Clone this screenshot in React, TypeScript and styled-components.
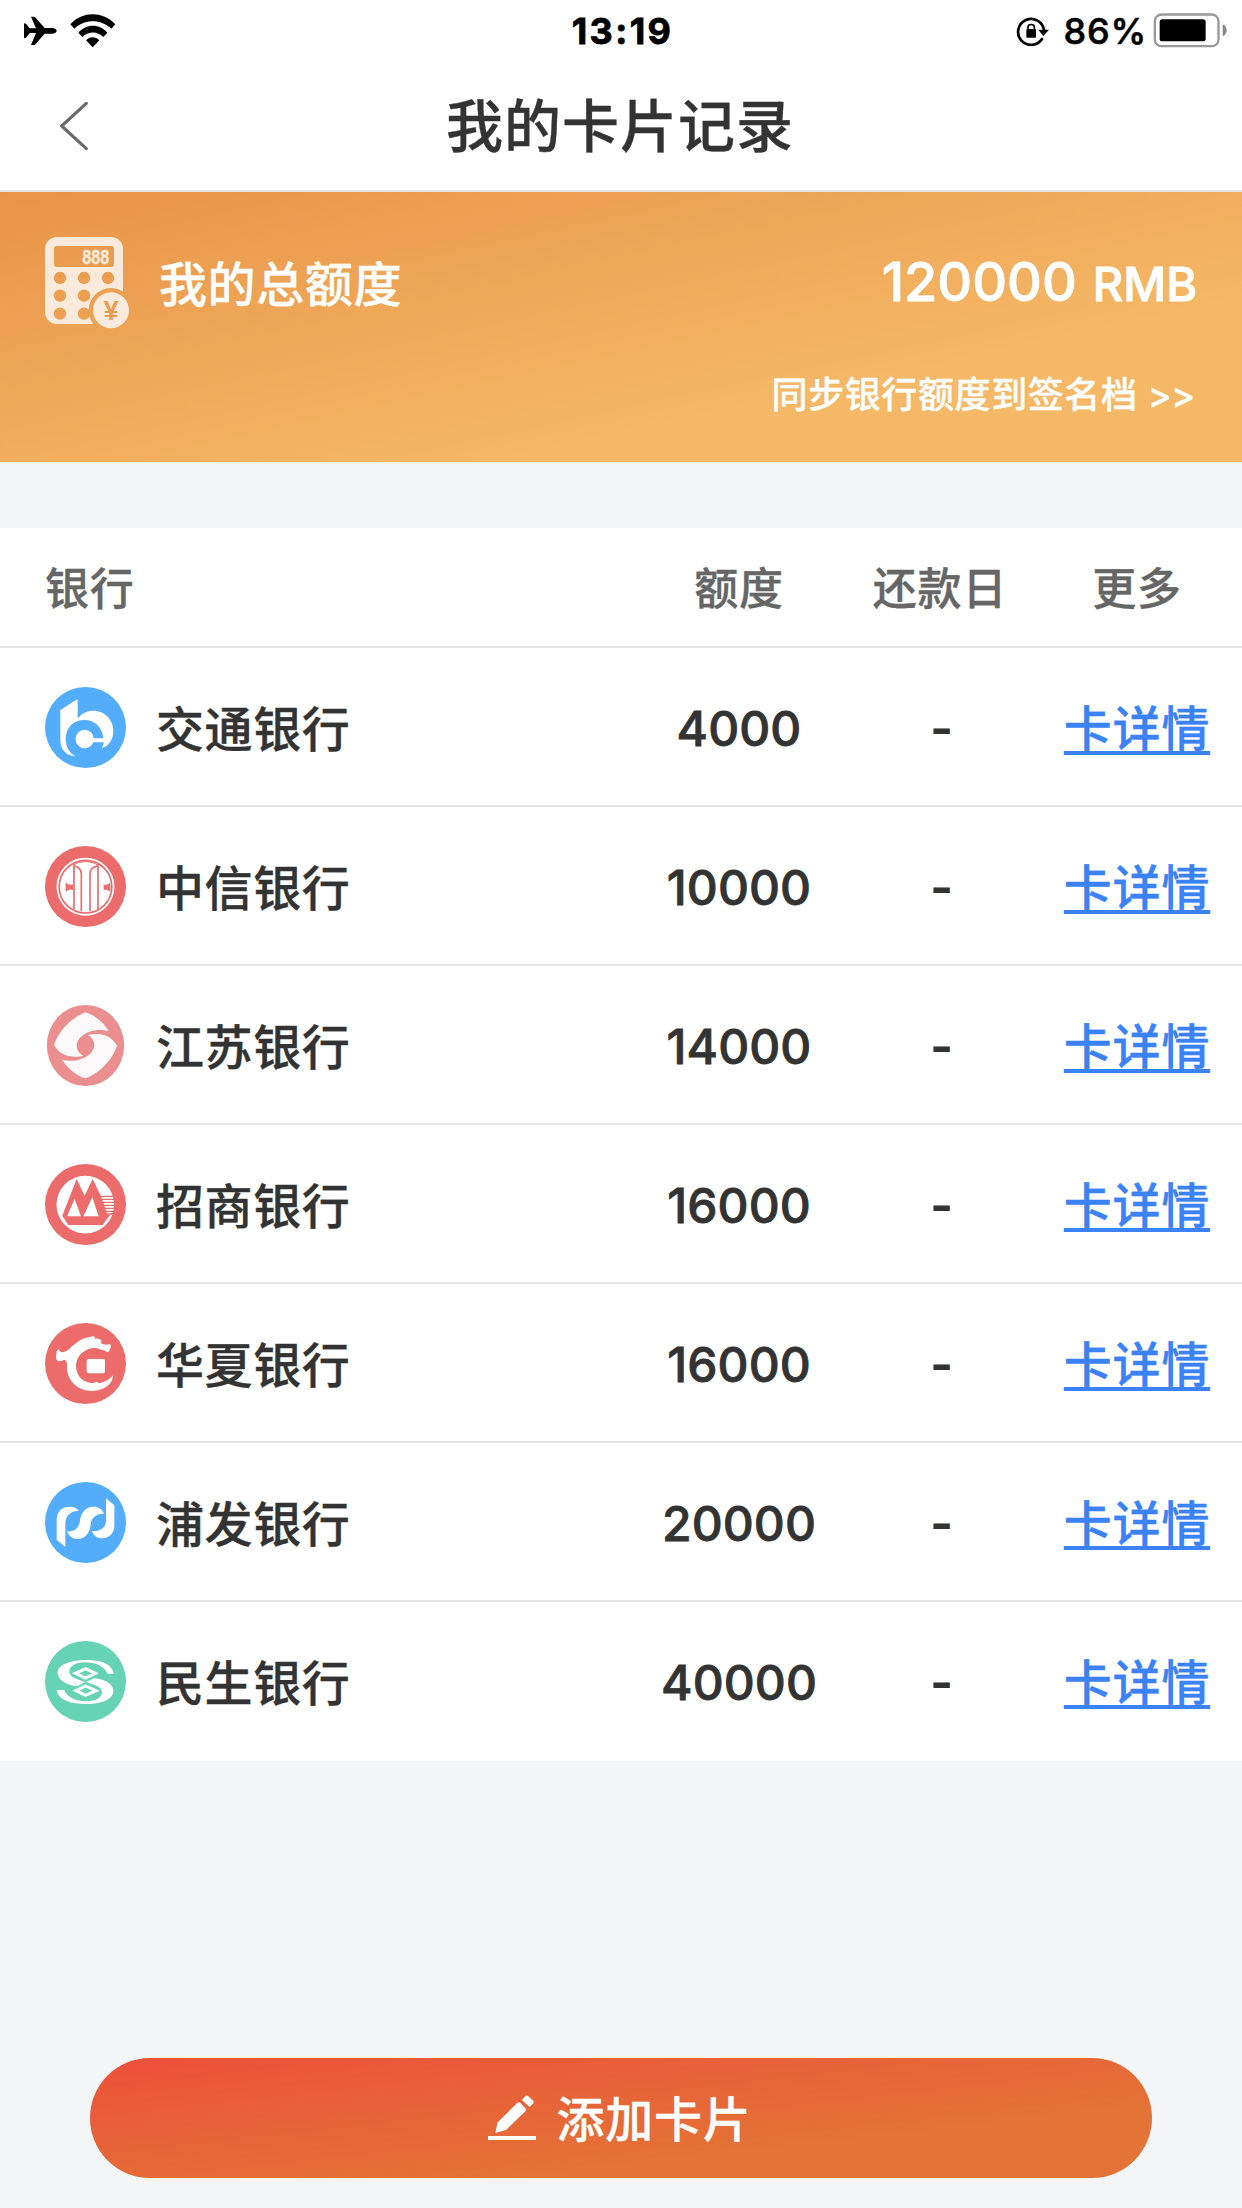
import React from "react";
import styled, { createGlobalStyle } from "styled-components";

const GlobalStyle = createGlobalStyle`
  body {
    margin: 0;
    background: #f3f5f7;
    font-family: Inter, "Noto Sans CJK SC", sans-serif;
    color: #333;
  }
`;

const Screen = styled.div`
  display: flex;
  flex-direction: column;
  width: 1242px;
  height: 2208px;
  overflow: hidden;
  background: #f3f5f7;
  -webkit-text-stroke-width: 0.35px;
`;

const StatusBar = styled.div`
  display: grid;
  grid-template-columns: 1fr auto 1fr;
  align-items: center;
  height: 60px;
  padding: 2px 15px 0 24px;
  box-sizing: border-box;
  background: #fff;
  color: #000;
`;

const StatusGroup = styled.div<{ $end?: boolean }>`
  display: flex;
  align-items: center;
  justify-content: ${(p) => (p.$end ? "flex-end" : "flex-start")};
`;

const Clock = styled.div`
  font-size: 36px;
  line-height: 40px;
  font-weight: 700;
  letter-spacing: 2.4px;
  margin-right: 6px;
  -webkit-text-stroke-width: 0.8px;
`;

const Percent = styled.span`
  font-size: 36px;
  line-height: 40px;
  font-weight: 500;
  letter-spacing: 0.8px;
  margin: 0 6px 0 15px;
  -webkit-text-stroke-width: 0.6px;
`;

const NavBar = styled.header`
  display: grid;
  grid-template-columns: 120px 1fr 120px;
  align-items: center;
  height: 132px;
  box-sizing: border-box;
  border-bottom: 2px solid #e5e5e5;
  background: #fff;
`;

const BackButton = styled.button`
  display: flex;
  padding: 2px 0 0 60px;
  border: 0;
  background: none;
`;

const Title = styled.h1`
  margin: 0;
  padding: 4px 2px 0 0;
  text-align: center;
  font-size: 57px;
  line-height: 80px;
  font-weight: 500;
  letter-spacing: 1px;
`;

const Summary = styled.section`
  display: flex;
  flex-direction: column;
  height: 270px;
  box-sizing: border-box;
  padding: 45px 45px 0;
  background: linear-gradient(to bottom right, #e99348, #f4b866 70%);
  color: #fff;
`;

const SummaryRow = styled.div`
  display: flex;
  align-items: center;
  height: 92px;
`;

const SummaryLabel = styled.div`
  flex: 1;
  margin-left: 30px;
  padding-bottom: 5px;
  font-size: 48px;
  font-weight: 500;
  letter-spacing: 0.6px;
`;

const Total = styled.div`
  display: flex;
  align-items: baseline;
  gap: 16px;
  padding-bottom: 3px;
  font-weight: 500;
  font-size: 54px;
  -webkit-text-stroke-width: 0.9px;
`;

const Currency = styled.span`
  font-size: 47px;
`;

const SyncLink = styled.a`
  align-self: flex-end;
  margin-top: 39px;
  padding-right: 2px;
  font-size: 36px;
  line-height: 54px;
  font-weight: 500;
  letter-spacing: 0.6px;
`;

const Arrows = styled.span`
  letter-spacing: -0.4px;
`;

const Table = styled.section`
  margin-top: 66px;
  background: #fff;
`;

const Row = styled.div<{ $head?: boolean }>`
  display: grid;
  grid-template-columns: 1fr 202px 200px 194px;
  align-items: center;
  justify-items: center;
  height: ${(p) => (p.$head ? 120 : 159)}px;
  box-sizing: border-box;
  padding: ${(p) => (p.$head ? "0 8px 2px 45px" : "2px 8px 0 45px")};
  border-bottom: 2px solid #e5e5e5;
  font-size: ${(p) => (p.$head ? 44 : 48)}px;
  font-weight: 500;
  letter-spacing: 0.8px;
  color: ${(p) => (p.$head ? "#666" : "#333")};

  &:last-child {
    border-bottom-color: #fff;
  }
`;

const Bank = styled.div`
  display: flex;
  align-items: center;
  justify-self: start;
  gap: 30px;
`;

const BankName = styled.span`
  padding-bottom: 4px;
  letter-spacing: 0.6px;
`;

const Amount = styled.span`
  padding-top: 1px;
  letter-spacing: 0.1px;
  -webkit-text-stroke-width: 0.8px;
`;

const DueDay = styled.span`
  padding: 1px 0 0 4px;
  -webkit-text-stroke-width: 0.8px;
`;

const Detail = styled.a`
  line-height: 56px;
  color: #3b82f7;
  padding-top: 3px;
  text-decoration: underline;
  text-decoration-thickness: 4px;
  text-decoration-skip-ink: none;
  text-underline-offset: 5px;
`;

const AddButton = styled.button`
  display: flex;
  align-items: center;
  justify-content: center;
  gap: 21px;
  width: 1062px;
  height: 120px;
  margin: auto auto 30px;
  padding: 0 3px 0 0;
  border: 0;
  border-radius: 60px;
  background: linear-gradient(to bottom right, #ed503a, #e37336 70%);
  color: #fff;
  font: 500 48px Inter, "Noto Sans CJK SC", sans-serif;
  letter-spacing: 0.7px;
`;

const AddLabel = styled.span`
  padding-bottom: 5px;
`;

const WifiIcon = styled.svg`
  margin-left: 13px;
`;

const Plane = () => (
  <svg width="33" height="30" viewBox="72 50 99 90">
    <path d="M72 72L78 73L89 87H108L93 52H104L134 86H158C174 88 174 101 158 103H134L104 137H93L108 101H89L78 115L72 117Z" />
  </svg>
);

const Wifi = () => (
  <WifiIcon width="46" height="34" viewBox="211 38 138 102">
    <path d="M212 69C248 29 310 29 347 69L335 82C305 52 253 52 224 82Z" />
    <path d="M236 94C260 66 300 66 323 94L311 107C293 89 266 89 248 107Z" />
    <path d="M259 117C270 105 288 105 299 117L279 138Z" />
  </WifiIcon>
);

const RotationLock = () => (
  <svg width="33" height="30" viewBox="106 49 99 90">
    <path d="M184 118A39 39 0 1 1 190 92" fill="none" stroke="#000" strokeWidth="8" strokeLinecap="round" />
    <path d="M173 90H205L188 109Z" />
    <rect x="137" y="88" width="29" height="26" rx="3" />
    <path d="M142 90V82C142 72 161 72 161 82V90" fill="none" stroke="#000" strokeWidth="5" />
  </svg>
);

const Battery = () => (
  <svg width="74" height="36" viewBox="517 38 222 108">
    <rect x="522.5" y="42.5" width="191" height="95" rx="20" fill="none" stroke="#999" strokeWidth="7" />
    <rect x="537" y="57" width="138" height="66" rx="8" />
    <path d="M726 72C742 78 742 102 726 108Z" fill="#888" />
  </svg>
);

const Chevron = () => (
  <svg width="28" height="48" viewBox="180 306 84 144">
    <path d="M259 310L185 378L259 446" fill="none" stroke="#6b6b6b" strokeWidth="9.5" strokeLinecap="round" strokeLinejoin="round" />
  </svg>
);

const Calculator = () => (
  <svg width="84" height="92" viewBox="135 111 252 276">
    <mask id="keys">
      <rect x="135" y="111" width="234" height="261" rx="36" fill="#fff" />
      <rect x="162" y="138" width="180" height="63" rx="9" fill="#000" />
      {[234, 287, 341].map((y) =>
        [180, 252, 324].map((x) => <circle key={`${x}-${y}`} cx={x} cy={y} r="18.5" fill="#000" />)
      )}
      <circle cx="333" cy="331" r="67" fill="#000" />
    </mask>
    <rect x="135" y="111" width="252" height="276" fill="#faeadb" mask="url(#keys)" />
    <text
      x="247"
      y="192"
      fontFamily="Liberation Sans"
      fontWeight="700"
      fontSize="60"
      fill="#faeadb"
      stroke="#faeadb"
      textLength="81"
      lengthAdjust="spacingAndGlyphs"
    >
      888
    </text>
    <circle cx="333" cy="331" r="54" fill="#faeadb" />
    <text x="333" y="359" textAnchor="middle" fontFamily="Liberation Sans" fontWeight="700" fontSize="82" fill="#eb9c50">
      ¥
    </text>
  </svg>
);

const Pencil = () => (
  <svg width="48" height="46" viewBox="488 2096 48 46" fill="#fff">
    <path d="M495.3 2134L497.5 2123.5L517 2104.2Q519 2102.5 520.6 2104L525.6 2109.4Q526.6 2110.8 525.2 2112.4L506 2131Z" />
    <path d="M525.3 2097Q526.6 2095.8 528 2097L533 2101.6Q534.2 2103 533.2 2104.4L529.6 2108L522 2101Z" />
    <rect x="488" y="2137" width="48" height="4" />
  </svg>
);

const RED = "#ec6b6b";
const BLUE = "#54adfb";

const Bocom = () => (
  <svg width="81" height="81" viewBox="135 501 243 243">
    <circle cx="256.5" cy="622.5" r="121.5" fill={BLUE} />
    <path
      fill="#fff"
      d="M181 570L233 537V595C245 580 262 572 280 572C315 572 340 600 340 632C340 660 324 679 306 684L312 667H278V655H310C307 622 285 600 253 600C220 600 197 624 197 656C197 680 208 700 228 709C200 708 181 690 181 660Z"
    />
    <circle cx="254" cy="657" r="27.5" fill="#fff" />
  </svg>
);

const Citic = () => (
  <svg width="81" height="81" viewBox="45 48 243 243">
    <circle cx="166.5" cy="169.5" r="121.5" fill={RED} />
    <circle cx="166.5" cy="170" r="87" fill="#fff" />
    <circle cx="166.5" cy="170" r="79" fill="#fff" stroke={RED} strokeWidth="5" />
    <g fill="none" stroke={RED} strokeWidth="5">
      <path d="M132 102V238M204 102V238" />
      <path d="M132 108Q154 112 154 132V244M202 108Q180 112 180 132V244" />
      <path d="M133 105Q140 96 166.5 95Q194 96 201 105" strokeWidth="3" />
    </g>
    <path fill={RED} d="M107 157Q116 168 129 163V180Q116 175 107 186ZM241 157Q232 168 221 163V180Q232 175 241 186Z" />
  </svg>
);

const BLADE =
  "M72 645C82 615 110 570 166 547C190 553 220 575 236 603C205 595 175 603 160 615C142 627 136 645 143 660C147 669 153 674 160 677C145 681 125 682 108 676C90 669 80 658 72 645Z";

const Jiangsu = () => (
  <svg width="81" height="81" viewBox="45 525 243 243">
    <ellipse cx="166.5" cy="646.5" rx="116" ry="121.5" fill="#ea8e90" />
    <g fill="#fbf8f9">
      <path d={BLADE} />
      <path d={BLADE} transform="rotate(180 166.5 646)" />
    </g>
  </svg>
);

const Merchants = () => (
  <svg width="81" height="81" viewBox="45 42 243 243">
    <circle cx="166.5" cy="163.5" r="121.5" fill={RED} />
    <circle cx="166" cy="164" r="86.5" fill="#fff" />
    <path fill={RED} d="M97 197L140 87L164 137L188 87L212 137L233 195H240L218 225H115Z" />
    <path fill="#fff" d="M134 147L153 199H111ZM187 142L206 199H160Z" />
    <path stroke={RED} strokeWidth="4" d="M210 139H252M212 148H254M215 157H254M218 166H254M221 175H254M224 184H254M227 192H250" />
  </svg>
);

const Huaxia = () => (
  <svg width="81" height="81" viewBox="45 519 243 243">
    <circle cx="166.5" cy="640.5" r="121.5" fill={RED} />
    <path
      fill="#fff"
      d="M80 604L87 597C88 610 104 609 118 597C138 577 158 563 180 561Q188 557 194 560L195 566Q207 564 214 571L213 580Q222 586 241 583Q244 590 240 597Q240 604 231 607Q224 598 214 600C200 592 180 592 166 602C148 611 138 628 138 650C140 680 160 698 190 699L200 695L208 700C225 696 240 688 248 676C251 700 222 723 185 723C145 723 113 695 111 655C111 643 112 634 105 630C96 629 92 637 83 632C74 625 80 616 80 604Z"
    />
    <rect x="170" y="627" width="55" height="43" rx="6" fill="#fff" />
  </svg>
);

const Pudong = () => (
  <svg width="81" height="81" viewBox="45 36 243 243">
    <circle cx="166.5" cy="157.5" r="121.5" fill={BLUE} />
    <g fill="#fff">
      <path d="M80 209V150C80 125 95 110 118 110C131 110 141 114 147 123C122 121 106 138 106 162V231Z" />
      <path d="M111 184C132 186 147 175 150 152C153 127 167 110 191 110C206 110 216 116 222 131C202 131 184 140 182 163C180 190 165 207 142 207C128 207 117 199 111 184Z" />
      <path d="M228 85L253 106V168C253 190 236 205 216 205C201 205 190 197 186 183C211 185 228 174 228 150Z" />
    </g>
  </svg>
);

const Minsheng = () => (
  <svg width="81" height="81" viewBox="45 513 243 243">
    <circle cx="166.5" cy="634.5" r="121.5" fill="#66d3b4" />
    <path
      fill="#fff"
      d="M252 611H233C222 588 195 577 165 577C136 577 118 589 118 604C118 616 128 622 142 628L167 637L192 625C228 628 250 643 250 663C250 688 215 702 170 702C120 702 85 690 80 660H103C110 682 140 694 170 694C198 694 216 682 216 667C216 656 206 649 192 644L167 635L142 649C106 644 83 629 83 608C83 585 120 570 168 570C210 570 245 580 252 611Z"
    />
    <g stroke="#fff" strokeWidth="9" fill="none">
      <path d="M167 596L196 610L167 624L136 610Z" />
      <path d="M167 648L198 662L167 676L138 662Z" />
    </g>
  </svg>
);

const cards = [
  { name: "交通银行", amount: "4000", Logo: Bocom },
  { name: "中信银行", amount: "10000", Logo: Citic },
  { name: "江苏银行", amount: "14000", Logo: Jiangsu },
  { name: "招商银行", amount: "16000", Logo: Merchants },
  { name: "华夏银行", amount: "16000", Logo: Huaxia },
  { name: "浦发银行", amount: "20000", Logo: Pudong },
  { name: "民生银行", amount: "40000", Logo: Minsheng },
];

export default function App() {
  return (
    <Screen>
      <GlobalStyle />
      <StatusBar>
        <StatusGroup>
          <Plane />
          <Wifi />
        </StatusGroup>
        <Clock>13:19</Clock>
        <StatusGroup $end>
          <RotationLock />
          <Percent>86%</Percent>
          <Battery />
        </StatusGroup>
      </StatusBar>
      <NavBar>
        <BackButton aria-label="返回">
          <Chevron />
        </BackButton>
        <Title>我的卡片记录</Title>
      </NavBar>
      <Summary>
        <SummaryRow>
          <Calculator />
          <SummaryLabel>我的总额度</SummaryLabel>
          <Total>
            120000 <Currency>RMB</Currency>
          </Total>
        </SummaryRow>
        <SyncLink>
          同步银行额度到签名档 <Arrows>&gt;&gt;</Arrows>
        </SyncLink>
      </Summary>
      <Table>
        <Row $head>
          <Bank>银行</Bank>
          <span>额度</span>
          <span>还款日</span>
          <span>更多</span>
        </Row>
        {cards.map(({ name, amount, Logo }) => (
          <Row key={name}>
            <Bank>
              <Logo />
              <BankName>{name}</BankName>
            </Bank>
            <Amount>{amount}</Amount>
            <DueDay>-</DueDay>
            <Detail>卡详情</Detail>
          </Row>
        ))}
      </Table>
      <AddButton>
        <Pencil />
        <AddLabel>添加卡片</AddLabel>
      </AddButton>
    </Screen>
  );
}
